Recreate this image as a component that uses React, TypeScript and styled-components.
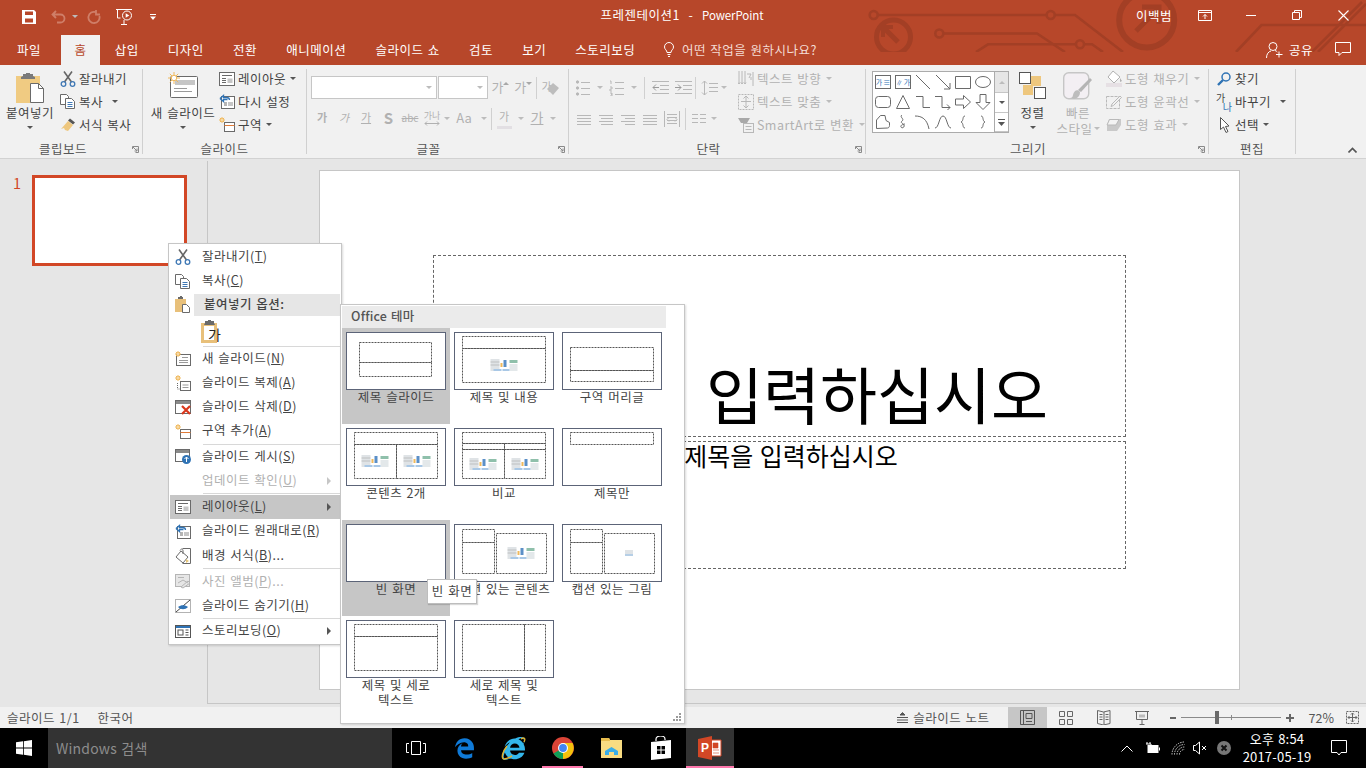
import React from "react";
import styled, { createGlobalStyle } from "styled-components";
import { FaEdgeLegacy, FaInternetExplorer } from "react-icons/fa";

const GlobalStyle = createGlobalStyle`
  html, body {
    margin: 0;
    padding: 0;
    background: #000;
  }
  * {
    box-sizing: border-box;
  }
  body {
    font-family: "Noto Sans CJK KR", "Noto Sans", sans-serif;
    font-size: 12.5px;
    letter-spacing: 0.5px;
    word-spacing: 1px;
    color: #444;
  }
  svg {
    display: block;
    flex-shrink: 0;
  }
`;

const RED = "#b7472a";
const DIS = "#b1b1b1";
const ST = "#6a6a6a";

const Window = styled.div`
  position: relative;
  width: 1366px;
  height: 768px;
  overflow: hidden;
  display: flex;
  flex-direction: column;
  background: #e6e6e6;
`;

/* ---------- header ---------- */
const Header = styled.header`
  position: relative;
  height: 65px;
  background: ${RED};
  color: #fff;
  flex-shrink: 0;
`;
const CircuitArt = styled.svg`
  position: absolute;
  left: 0;
  top: 0;
`;
const TitleBar = styled.div`
  position: relative;
  height: 35px;
  display: grid;
  grid-template-columns: 1fr auto 1fr;
  align-items: start;
`;
const Qat = styled.div`
  display: flex;
  align-items: center;
  padding-left: 22px;
  height: 33px;
`;
const QatSlot = styled.span<{ $ml: number }>`
  margin-left: ${(p) => p.$ml}px;
  display: flex;
`;
const DocTitle = styled.div`
  line-height: 30px;
  white-space: pre;
  padding-right: 2px;
`;
const LatinName = styled.span`
  font-size: 11.5px;
  letter-spacing: -0.1px;
`;
const WinControls = styled.div`
  display: flex;
  justify-content: flex-end;
  align-items: center;
  height: 30px;
`;
const UserName = styled.span`
  margin-right: 10px;
`;
const WinBtn = styled.div`
  width: 46px;
  height: 30px;
  display: flex;
  align-items: center;
  justify-content: center;
`;
const TabRow = styled.nav`
  position: relative;
  height: 30px;
  display: flex;
  padding-left: 2px;
`;
const Tab = styled.div<{ $active?: boolean; $first?: boolean }>`
  height: 30px;
  line-height: 29px;
  padding: 0 ${(p) => (p.$first ? 15 : p.$active ? 13.5 : 14.6)}px;
  margin-right: ${(p) => (p.$first ? 5 : 0)}px;
  background: ${(p) => (p.$active ? "#f1f1f1" : "transparent")};
  color: ${(p) => (p.$active ? RED : "#fff")};
  white-space: nowrap;
`;
const TellMe = styled.div`
  margin-left: 14px;
  display: flex;
  align-items: center;
  gap: 8px;
  height: 29px;
  color: #f4dcd5;
`;
const ShareArea = styled.div`
  margin-left: auto;
  padding-right: 15px;
  display: flex;
  align-items: center;
  height: 29px;
  color: #fff;
`;
const ShareLabel = styled.span`
  margin: 0 22px 0 6px;
`;

/* ---------- ribbon ---------- */
const Ribbon = styled.section`
  height: 94px;
  flex-shrink: 0;
  display: flex;
  padding-top: 4px;
  background: #f1f1f1;
  border-bottom: 1px solid #d2d2d2;
  position: relative;
`;
const Group = styled.div<{ $w: number }>`
  position: relative;
  width: ${(p) => p.$w}px;
  height: 85px;
  border-right: 1px solid #d0d0d0;
  display: flex;
  flex-direction: column;
`;
const GroupBody = styled.div<{ $pl?: number }>`
  height: 72px;
  flex-shrink: 0;
  margin-top: -1px;
  padding-left: ${(p) => p.$pl ?? 0}px;
  display: flex;
`;
const GroupLabel = styled.div<{ $pr?: number }>`
  height: 14px;
  flex-shrink: 0;
  line-height: 14px;
  margin-top: 2px;
  text-align: center;
  padding-right: ${(p) => p.$pr ?? 0}px;
  color: #555;
`;
const Launcher = styled.svg`
  position: absolute;
  right: 3px;
  bottom: 1px;
`;
const BigBtn = styled.div<{ $w: number; $off?: boolean }>`
  width: ${(p) => p.$w}px;
  padding-top: 4px;
  display: flex;
  flex-direction: column;
  align-items: center;
  color: ${(p) => (p.$off ? DIS : "#444")};
`;
const BigIconBox = styled.div`
  height: 33px;
`;
const BigLabel = styled.div`
  height: 16px;
  padding-bottom: 2px;
  white-space: nowrap;
  display: flex;
  align-items: center;
`;
const Caret = styled.i<{ $off?: boolean; $ml?: number; $mt?: number }>`
  display: block;
  width: 0;
  height: 0;
  flex-shrink: 0;
  margin-left: ${(p) => p.$ml ?? 0}px;
  margin-top: ${(p) => p.$mt ?? 0}px;
  border-left: 3px solid transparent;
  border-right: 3px solid transparent;
  border-top: 3px solid ${(p) => (p.$off ? "#bcbcbc" : "#555")};
`;
const SmallCol = styled.div<{ $ml?: number }>`
  display: flex;
  flex-direction: column;
  margin-left: ${(p) => p.$ml ?? 0}px;
`;
const SmallRow = styled.div<{ $off?: boolean }>`
  height: 23px;
  padding-bottom: 2px;
  display: flex;
  align-items: center;
  gap: 3px;
  white-space: nowrap;
  color: ${(p) => (p.$off ? DIS : "#444")};
`;
const IconSlot = styled.span`
  width: 16px;
  height: 16px;
  display: flex;
  align-items: center;
  justify-content: center;
`;
const ToolCol = styled.div<{ $w: number }>`
  width: ${(p) => p.$w}px;
  display: flex;
  flex-direction: column;
  padding-top: 8px;
`;
const ToolRow = styled.div`
  height: 23px;
  display: flex;
  align-items: center;
  margin-bottom: 8px;
`;
const Combo = styled.div<{ $w: number }>`
  width: ${(p) => p.$w}px;
  height: 23px;
  margin-right: 1px;
  background: #fff;
  border: 1px solid #c6c6c6;
  display: flex;
  align-items: center;
  justify-content: flex-end;
  padding-right: 4px;
`;
const ToolBtn = styled.div<{ $w: number }>`
  width: ${(p) => p.$w}px;
  height: 23px;
  display: flex;
  align-items: center;
  justify-content: center;
  color: ${DIS};
  font-size: 11px;
  letter-spacing: 0;
  white-space: nowrap;
`;
const ToolSep = styled.div<{ $mx: number }>`
  width: 1px;
  height: 22px;
  margin: 0 ${(p) => p.$mx}px;
  background: #d0d0d0;
`;
const Glyph = styled.span<{ $b?: boolean; $i?: boolean; $u?: boolean; $s?: boolean; $fs?: number }>`
  font-size: ${(p) => p.$fs ?? 11}px;
  line-height: 17px;
  margin-bottom: 2px;
  font-weight: ${(p) => (p.$b ? 700 : 400)};
  font-style: ${(p) => (p.$i ? "italic" : "normal")};
  text-decoration: ${(p) => (p.$u ? "underline" : p.$s ? "line-through" : "none")};
`;
const StackedGlyph = styled.div`
  display: flex;
  flex-direction: column;
  align-items: center;
`;
const TinyText = styled.span`
  font-size: 9px;
  line-height: 10px;
  letter-spacing: 0;
  color: ${DIS};
`;
const RaisedMark = styled.svg`
  margin: -9px 0 0 0;
`;
const OverlapMark = styled.svg`
  margin: 2px 0 0 -5px;
`;
const GlyphBar = styled.i`
  display: block;
  width: 15px;
  height: 3px;
  margin-top: -1px;
  background: #e2dfe3;
`;
const ReplaceBox = styled.span`
  display: flex;
  flex-direction: column;
  width: 16px;
  height: 17px;
  font-size: 10px;
  line-height: 9px;
  letter-spacing: 0;
  color: #444;
`;
const ReplaceLow = styled.span`
  align-self: flex-end;
  color: #2f73b5;
`;
const ShapeGallery = styled.div`
  width: 137px;
  height: 62px;
  margin-top: 3px;
  background: #fff;
  border: 1px solid #ababab;
  display: flex;
`;
const ShapeGrid = styled.div`
  width: 121px;
  display: grid;
  grid-template-columns: repeat(6, 20px);
  grid-auto-rows: 20px;
`;
const ShapeCell = styled.div`
  display: flex;
  align-items: center;
  justify-content: center;
`;
const TextBoxShape = styled.div<{ $vert?: boolean }>`
  width: 16px;
  height: 14px;
  border: 1px solid ${ST};
  display: flex;
  flex-direction: ${(p) => (p.$vert ? "row-reverse" : "row")};
  align-items: center;
  justify-content: center;
  gap: 1px;
  color: #2f73b5;
  font-size: 7px;
  line-height: 10px;
  letter-spacing: 0;
`;
const GalleryScroll = styled.div`
  flex: 1;
  display: flex;
  flex-direction: column;
  border-left: 1px solid #ababab;
`;
const ScrollBtn = styled.div<{ $off?: boolean; $h: number }>`
  height: ${(p) => p.$h}px;
  background: ${(p) => (p.$off ? "#e6e6e6" : "#fff")};
  border-bottom: 1px solid #c6c6c6;
  display: flex;
  align-items: center;
  justify-content: center;
`;
const UpCaret = styled(Caret)`
  transform: rotate(180deg);
`;
const CollapseBtn = styled.svg`
  position: absolute;
  right: 9px;
  bottom: 5px;
`;

/* ---------- workspace ---------- */
const Workspace = styled.main`
  flex: 1;
  display: flex;
  min-height: 0;
  padding-top: 2px;
`;
const ThumbPane = styled.aside`
  width: 207px;
  flex-shrink: 0;
  display: flex;
  align-items: flex-start;
  padding: 14px 0 0 13px;
`;
const ThumbNumber = styled.span`
  width: 19px;
  color: #d24726;
  font-size: 14.5px;
  line-height: 15px;
  letter-spacing: 0;
`;
const SlideThumb = styled.div`
  width: 155px;
  height: 91px;
  background: #fff;
  border: 3px solid #d24726;
`;
const EditArea = styled.div`
  flex: 1;
  margin-bottom: 3px;
  border-left: 1px solid #c6c6c6;
  border-bottom: 1px solid #c6c6c6;
  padding: 9px 0 0 111px;
`;
const Slide = styled.div`
  width: 921px;
  height: 520px;
  background: #fff;
  border: 1px solid #c6c6c6;
  padding: 84px 113px 0;
  display: flex;
  flex-direction: column;
  gap: 4px;
`;
const TitleHolder = styled.div`
  height: 182px;
  border: 1px dashed #666;
  color: #000;
  font-size: 62px;
  line-height: 1;
  letter-spacing: 0;
  word-spacing: 10px;
  display: flex;
  align-items: flex-end;
  justify-content: center;
  padding-bottom: 12px;
`;
const SubHolder = styled.div`
  height: 128px;
  border: 1px dashed #666;
  color: #000;
  font-size: 25px;
  line-height: 27px;
  letter-spacing: 0;
  text-align: center;
`;

/* ---------- status bar ---------- */
const StatusBar = styled.footer`
  height: 21px;
  flex-shrink: 0;
  background: #f1f1f1;
  display: flex;
  align-items: center;
  padding-left: 7px;
  color: #555;
`;
const StatusText = styled.span<{ $mr?: number; $ml?: number }>`
  margin-left: ${(p) => p.$ml ?? 0}px;
  margin-right: ${(p) => p.$mr ?? 0}px;
  white-space: nowrap;
`;
const Percent = styled(StatusText)`
  letter-spacing: 0;
`;
const StatusRight = styled.div`
  margin-left: auto;
  display: flex;
  align-items: center;
  height: 21px;
`;
const ViewBtn = styled.div<{ $active?: boolean; $w: number }>`
  width: ${(p) => p.$w}px;
  height: 21px;
  background: ${(p) => (p.$active ? "#c6c6c6" : "transparent")};
  display: flex;
  align-items: center;
  justify-content: center;
`;
const NoteGlyph = styled.svg`
  margin-right: 5px;
`;
const MinusGlyph = styled.svg`
  margin-left: 9px;
`;
const FitGlyph = styled.svg`
  margin-right: 7px;
`;
const ZoomTrack = styled.div`
  position: relative;
  width: 100px;
  height: 1px;
  margin: 0 5px;
  background: #8a8a8a;
`;
const ZoomTick = styled.i`
  position: absolute;
  left: 50px;
  top: -2px;
  width: 1px;
  height: 5px;
  background: #8a8a8a;
`;
const ZoomThumb = styled.i`
  position: absolute;
  left: 34px;
  top: -6px;
  width: 4px;
  height: 13px;
  background: #6a6a6a;
`;

/* ---------- task bar ---------- */
const Taskbar = styled.footer`
  height: 40px;
  flex-shrink: 0;
  background: #000;
  display: flex;
  align-items: center;
  color: #fff;
`;
const StartBtn = styled.div`
  width: 48px;
  height: 40px;
  display: flex;
  align-items: center;
  justify-content: center;
`;
const SearchBox = styled.div`
  width: 344px;
  height: 40px;
  background: #333;
  color: #8d8d8d;
  font-size: 14px;
  line-height: 40px;
  padding-left: 8px;
  letter-spacing: 0.2px;
`;
const TaskBtn = styled.div<{ $w?: number; $open?: boolean; $active?: boolean; $ml?: number }>`
  position: relative;
  width: ${(p) => p.$w ?? 48}px;
  height: 40px;
  margin-left: ${(p) => p.$ml ?? 0}px;
  background: ${(p) => (p.$active ? "#333" : "transparent")};
  display: flex;
  align-items: center;
  justify-content: center;
  &::after {
    content: "";
    display: ${(p) => (p.$open ? "block" : "none")};
    position: absolute;
    left: ${(p) => (p.$active ? 0 : 4)}px;
    right: ${(p) => (p.$active ? 0 : 4)}px;
    bottom: 0;
    height: 2px;
    background: #ff78ad;
  }
`;
const IeRing = styled.svg`
  position: absolute;
  left: 12px;
  top: 7px;
`;
const Tray = styled.div`
  margin-left: auto;
  display: flex;
  align-items: center;
  height: 40px;
`;
const TraySlot = styled.div<{ $w: number }>`
  width: ${(p) => p.$w}px;
  display: flex;
  justify-content: center;
`;
const Clock = styled.div`
  width: 78px;
  text-align: center;
  line-height: 18px;
  font-size: 13px;
  letter-spacing: 0.2px;
  color: #fff;
`;

/* ---------- context menu ---------- */
const ContextMenu = styled.div`
  position: absolute;
  left: 168px;
  top: 243px;
  width: 174px;
  height: 402px;
  padding: 1px;
  background: #fff;
  border: 1px solid #c6c6c6;
  box-shadow: 1px 1px 2px rgba(0, 0, 0, 0.15);
`;
const MenuItem = styled.div<{ $off?: boolean; $on?: boolean }>`
  height: 24.25px;
  display: flex;
  align-items: center;
  background: ${(p) => (p.$on ? "#c6c6c6" : "transparent")};
  color: ${(p) => (p.$off ? DIS : "#444")};
  white-space: nowrap;
  padding-left: 5px;
`;
const MenuIcon = styled.span`
  width: 16px;
  height: 16px;
  margin-right: 11px;
  display: flex;
  align-items: center;
  justify-content: center;
`;
const MenuText = styled.span`
  flex: 1;
  line-height: 16px;
  padding-bottom: 2px;
`;
const Arrow = styled.i<{ $off?: boolean }>`
  width: 0;
  height: 0;
  margin-right: 9px;
  border-top: 4px solid transparent;
  border-bottom: 4px solid transparent;
  border-left: 4px solid ${(p) => (p.$off ? "#c6c6c6" : "#555")};
`;
const MenuHeader = styled.div`
  height: 22px;
  display: flex;
  align-items: center;
  padding-left: 5px;
  font-weight: 500;
  color: #444;
`;
const MenuHeaderText = styled.span`
  flex: 1;
  height: 22px;
  line-height: 20px;
  margin-left: 3px;
  padding-left: 10px;
  background: #e6e6e6;
`;
const PasteRow = styled.div`
  height: 30px;
  padding: 4px 0 0 31px;
`;
const PasteOption = styled.span`
  position: relative;
  display: block;
  width: 22px;
  height: 24px;
`;
const PasteGa = styled.span`
  position: absolute;
  left: 7px;
  top: 5px;
  font-size: 14px;
  line-height: 18px;
  color: #222;
`;
const MenuSep = styled.div<{ $h: number }>`
  height: ${(p) => p.$h}px;
  margin-left: 33px;
  display: flex;
  align-items: flex-start;
  &::before {
    content: "";
    flex: 1;
    height: 1px;
    background: #d8d8d8;
  }
`;

/* ---------- layout gallery ---------- */
const LayoutGallery = styled.div`
  position: absolute;
  left: 340px;
  top: 304px;
  width: 345px;
  height: 420px;
  padding: 1px;
  background: #fff;
  border: 1px solid #c6c6c6;
  box-shadow: 1px 1px 2px rgba(0, 0, 0, 0.15);
`;
const GalleryHead = styled.div`
  width: 324px;
  height: 22px;
  line-height: 20px;
  padding-left: 9px;
  background: #ebebeb;
  color: #555;
  font-weight: 500;
  letter-spacing: 0.2px;
`;
const LayoutGrid = styled.div`
  display: grid;
  grid-template-columns: repeat(3, 108px);
  grid-auto-rows: 96px;
`;
const LayoutCell = styled.div<{ $on?: boolean }>`
  padding-top: 4px;
  background: ${(p) => (p.$on ? "#c6c6c6" : "transparent")};
  display: flex;
  flex-direction: column;
  align-items: center;
`;
const LayoutName = styled.div`
  width: 100px;
  margin-top: -1px;
  line-height: 15px;
  text-align: center;
  color: #444;
`;
const Grip = styled.svg`
  position: absolute;
  right: 3px;
  bottom: 2px;
`;
const Tooltip = styled.div`
  position: absolute;
  left: 427px;
  top: 579px;
  width: 50px;
  height: 25px;
  line-height: 22px;
  text-align: center;
  background: #fff;
  border: 1px solid #bdbdbd;
  box-shadow: 1px 1px 1px rgba(0, 0, 0, 0.15);
  color: #444;
`;

/* ---------- icons ---------- */
const Save = () => (
  <svg width="14" height="14" viewBox="0 0 14 14">
    <path fill="#fff" fillRule="evenodd" d="M0 0h12l2 2v12H0zM3 1.5v3.5h8V1.5zM3 8.5v4h8v-4z" />
  </svg>
);
const Undo = () => (
  <svg width="15" height="14" viewBox="0 0 15 14" fill="none" stroke="#cf7e68" strokeWidth="1.8">
    <path d="M5 1L1.5 4.5 5 8M2 4.5h7.5a4 4 0 0 1 0 8H6" />
  </svg>
);
const Redo = () => (
  <svg width="14" height="14" viewBox="0 0 14 14" fill="none" stroke="#cf7e68" strokeWidth="1.8">
    <path d="M9 2.2a5.6 5.6 0 1 0 3.4 3.8M9 0v4.5h4" />
  </svg>
);
const PresentIcon = () => (
  <svg width="17" height="16" viewBox="0 0 17 16" fill="none" stroke="#fff">
    <path d="M0 .5h16M1.5 1v8h3M8 11v4M5 15.5h6" />
    <circle cx="11" cy="6.5" r="4.5" />
    <path d="M9.7 4.2l3.6 2.3-3.6 2.3z" fill="#fff" stroke="none" />
  </svg>
);
const QatMore = () => (
  <svg width="6" height="6" viewBox="0 0 6 6" fill="#fff">
    <path d="M0 0h6v1H0zM0 2.5h6L3 6z" />
  </svg>
);
const QatMoreDark = () => (
  <svg width="7" height="7" viewBox="0 0 7 7" fill="#555">
    <path d="M0 0h7v1H0zM0 3h7L3.5 7z" />
  </svg>
);
const Circuit = () => (
  <CircuitArt width="1366" height="52" viewBox="0 0 1366 52" fill="none" stroke="#a33f25" strokeWidth="2.6">
    <circle cx="873.7" cy="15" r="4" />
    <path d="M878 15h168M1055 15h20l48 37" />
    <circle cx="1050.7" cy="15" r="4" />
    <circle cx="939.3" cy="33.5" r="4" />
    <path d="M943.5 33.5h93.5l28 18.5" />
    <path d="M976 52l12-7.7h88M1084 44.3h8l11 7.7" />
    <circle cx="1080" cy="44.3" r="4" />
    <circle cx="893.5" cy="37" r="17" strokeWidth="5" />
    <path d="M884 28l14 14" strokeWidth="5" />
    <path d="M883 37v-10h10" strokeWidth="4" />
    <circle cx="1146.7" cy="20" r="27.5" strokeWidth="6" />
    <path d="M1136 31l22-22M1142 7h17v17" strokeWidth="5" />
    <path d="M1236 52l25.5-27H1366M1312 52l50-50M1318 52l48-48" />
  </CircuitArt>
);
const DisplayIcon = () => (
  <svg width="14" height="11" viewBox="0 0 14 11" fill="none" stroke="#fff">
    <path d="M.5.5h13v10H.5zM.5 2.5h13M7 9V4.5M5 6.5l2-2 2 2" />
  </svg>
);
const MinIcon = () => (
  <svg width="10" height="1" viewBox="0 0 10 1">
    <path d="M0 0h10v1H0z" fill="#fff" />
  </svg>
);
const RestoreIcon = () => (
  <svg width="10" height="10" viewBox="0 0 10 10" fill="none" stroke="#fff">
    <path d="M.5 2.5h7v7h-7zM2.5 2.5v-2h7v7h-2" />
  </svg>
);
const CloseIcon = () => (
  <svg width="11" height="11" viewBox="0 0 11 11" stroke="#fff" strokeWidth="1.1">
    <path d="M.5.5l10 10M10.5.5l-10 10" />
  </svg>
);
const Bulb = () => (
  <svg width="10" height="15" viewBox="0 0 10 15" fill="none" stroke="#fff">
    <path d="M3 10.5C3 8 .5 7.5.5 5a4.5 4.5 0 0 1 9 0c0 2.5-2.5 3-2.5 5.5zM3.5 12.5h3M4 14.5h2" />
  </svg>
);
const ShareIcon = () => (
  <svg width="17" height="16" viewBox="0 0 17 16" fill="none" stroke="#fff">
    <circle cx="7" cy="4.5" r="4" />
    <path d="M.5 16c0-4 2-6.5 4.5-7M9 8.5c1 .3 1.7.8 2.3 1.5M13 9.5v6M10 12.5h6.5" />
  </svg>
);
const CommentIcon = () => (
  <svg width="16" height="15" viewBox="0 0 16 15" fill="none" stroke="#fff">
    <path d="M.5.5h15v10H7l-3 3v-3H.5z" />
  </svg>
);
const Scissors = () => (
  <svg width="16" height="16" viewBox="0 0 16 16" fill="none">
    <path d="M4 .5l7.5 10.5M12 .5L4.5 11" stroke="#666" strokeWidth="1.6" />
    <circle cx="3.5" cy="13" r="2.3" stroke="#3f78b5" strokeWidth="1.3" />
    <circle cx="12.5" cy="13" r="2.3" stroke="#3f78b5" strokeWidth="1.3" />
  </svg>
);
const CopyIcon = () => (
  <svg width="16" height="15" viewBox="0 0 16 15" fill="#fff" stroke={ST}>
    <path d="M.5.5h6l2 2v8h-8z" />
    <path d="M5.5 4.5h6l3 3v7h-9z" />
    <path d="M7.5 8.5h5M7.5 10.5h5M7.5 12.5h5" stroke="#3f78b5" />
  </svg>
);
const PasteBig = () => (
  <svg width="28" height="31" viewBox="0 0 28 31">
    <path d="M0 4h24v27H0z" fill="#f0cb82" />
    <path d="M7 4V2h3V1h4v1h3v2l2 1v2H5V5z" fill="#7a7a7a" />
    <path d="M14.5 11.5h8l5 5v14h-13z" fill="#fff" stroke="#6a6a6a" />
    <path d="M22.5 11.5v5h5" fill="none" stroke="#6a6a6a" />
  </svg>
);
const Painter = () => (
  <svg width="16" height="14" viewBox="0 0 16 14">
    <path d="M10 .5l5 4-2 2-5-4z" fill="#555" />
    <path d="M8 3l5 4-5 6-3-1-1-2-3 1z" fill="#eec77e" />
  </svg>
);
const Sun = ({ x, y, r = 5 }: { x: number; y: number; r?: number }) => (
  <g stroke="#f0b95c" strokeWidth="1">
    <path
      d={`M${x - r} ${y}h${2 * r}M${x} ${y - r}v${2 * r}M${x - r * 0.7} ${y - r * 0.7}l${1.4 * r} ${1.4 * r}M${x + r * 0.7} ${y - r * 0.7}l${-1.4 * r} ${1.4 * r}`}
    />
    <circle cx={x} cy={y} r={r * 0.45} fill="#fff" />
  </g>
);
const NewSlideBig = () => (
  <svg width="30" height="26" viewBox="0 0 30 26">
    <rect x="2.5" y="4.5" width="27" height="21" rx="1" fill="#fff" stroke="#6a6a6a" />
    <path d="M7 8h20v5H7z" fill="#c6c6c6" />
    <path d="M6 16.5h13M6 19.5h18" stroke="#9a9a9a" />
    <Sun x={6} y={6} r={6} />
  </svg>
);
const LayoutIcon = () => (
  <svg width="16" height="14" viewBox="0 0 16 14" fill="#fff" stroke={ST}>
    <rect x=".5" y=".5" width="15" height="13" />
    <path d="M3 3.5h10M3 6.5h4M3 8.5h4M3 10.5h4" />
    <rect x="8.5" y="6.5" width="5" height="4.5" fill="#c6c6c6" stroke="none" />
  </svg>
);
const ResetIcon = () => (
  <svg width="16" height="15" viewBox="0 0 16 15" fill="#fff">
    <rect x="2.5" y="2.5" width="13" height="12" stroke={ST} />
    <path d="M5 9h3M5 11h3" stroke={ST} />
    <rect x="9" y="8" width="5" height="4" fill="#c6c6c6" />
    <path d="M1 4.5L4.5 1.5v2h3c2 0 3 1 3 2.5M1 4.5l3.5 3v-2h4" fill="none" stroke="#2f73b5" strokeWidth="1.3" />
  </svg>
);
const SectionIcon = () => (
  <svg width="16" height="15" viewBox="0 0 16 15" fill="#fff">
    <rect x="5.5" y="5.5" width="10" height="9" stroke={ST} />
    <path d="M5.5 8.5h10" stroke="#e07b39" />
    <Sun x={3} y={3} r={3} />
  </svg>
);
const DupIcon = () => (
  <svg width="16" height="16" viewBox="0 0 16 16" fill="#fff">
    <rect x="5.5" y="6.5" width="10" height="9" stroke={ST} />
    <path d="M7.5 10h6M7.5 12.5h6" stroke="#9a9a9a" />
    <path d="M2.5 8v6h3" fill="none" stroke={ST} strokeDasharray="1 1" />
    <Sun x={3} y={3} r={3} />
  </svg>
);
const NewSmall = () => (
  <svg width="16" height="15" viewBox="0 0 16 15" fill="#fff">
    <rect x="1.5" y="3.5" width="14" height="11" stroke={ST} />
    <path d="M7 6.5h6M4 9.5h9M4 11.5h9" stroke="#9a9a9a" />
    <Sun x={3} y={3} r={3} />
  </svg>
);
const DeleteIcon = () => (
  <svg width="16" height="15" viewBox="0 0 16 15" fill="#fff">
    <rect x=".5" y=".5" width="15" height="13" stroke={ST} />
    <path d="M1 1h14v3H1z" fill="#8a8a8a" />
    <path d="M7 6l8 8M15 6l-8 8" stroke="#d9371c" strokeWidth="2.2" />
  </svg>
);
const PublishIcon = () => (
  <svg width="16" height="15" viewBox="0 0 16 15" fill="#fff">
    <rect x=".5" y=".5" width="14" height="12" stroke={ST} />
    <path d="M1 1h13v3H1z" fill="#8a8a8a" />
    <circle cx="11.5" cy="10.5" r="4.5" fill="#2f73b5" />
    <path d="M11.5 13v-5M9.5 10l2-2 2 2" stroke="#fff" fill="none" />
  </svg>
);
const BgIcon = () => (
  <svg width="16" height="16" viewBox="0 0 16 16" fill="#fff" stroke={ST}>
    <path d="M7.5.5h8v15h-8" />
    <path d="M1 9l5-6 7 6-5 6z" />
    <path d="M5 2.5c1-2 3-2 3 .5v3" fill="none" />
    <path d="M11 11l3 2-3 2z" fill="#e8c676" stroke="none" />
  </svg>
);
const AlbumIcon = () => (
  <svg width="16" height="15" viewBox="0 0 16 15" fill="#e6e6e6" stroke="#b5b5b5">
    <rect x=".5" y=".5" width="14" height="12" />
    <path d="M3 3.5h6M3 9l5-3 5 3M6 13l7-6 2 2-7 5z" />
  </svg>
);
const HideIcon = () => (
  <svg width="16" height="14" viewBox="0 0 16 14" fill="none">
    <path d="M.5.5h15v13H.5z" stroke="#666" strokeDasharray="1 1" />
    <path d="M1 13L15 1" stroke="#444" />
    <path d="M3 8c3-2.5 7-2.5 10 0-3 3-7 3-10 0z" fill="#2f73b5" />
  </svg>
);
const BoardIcon = () => (
  <svg width="16" height="13" viewBox="0 0 16 13" fill="#fff" stroke="#555">
    <rect x=".5" y=".5" width="15" height="12" />
    <path d="M1 1h14v2H1z" fill="#2f73b5" stroke="none" />
    <rect x="3" y="5" width="5" height="5" />
    <path d="M10.5 5h3M10.5 7.5h3M10.5 10h3" />
  </svg>
);
const PasteSmall = () => (
  <svg width="16" height="17" viewBox="0 0 16 17">
    <path d="M0 3h11v13H0z" fill="#e8c07a" />
    <path d="M3 3V1h2V0h2v1h1v2z" fill="#6a6a6a" />
    <path d="M7.5 8.5h4l3 3v5h-7z" fill="#fff" stroke="#6a6a6a" />
  </svg>
);
const PasteOptIcon = () => (
  <svg width="22" height="24" viewBox="0 0 22 24">
    <path d="M0 3h16v20H0z" fill="#e8c07a" />
    <path d="M3 6h10v14H3z" fill="#fff" />
    <path d="M4 3V1h3V0h3v1h3v2l1 2H3z" fill="#6a6a6a" />
  </svg>
);
const LauncherIcon = () => (
  <Launcher width="7" height="7" viewBox="0 0 7 7" fill="none" stroke="#8a8a8a">
    <path d="M.5 3V.5H6.5V6.5H3.5" />
    <path d="M1 1l4 4M5 2.5V5H2.5" />
  </Launcher>
);
const Lines = ({ rows, c = "#b8b8b8", w = 14 }: { rows: [number, number][]; c?: string; w?: number }) => (
  <svg width={w} height="16" viewBox={`0 0 ${w} 16`} stroke={c} fill="none">
    {rows.map(([x, y], i) => (
      <path key={i} d={`M${x} ${y}.5H${w}`} />
    ))}
  </svg>
);
const Bullets = () => (
  <svg width="14" height="16" viewBox="0 0 14 16" stroke="#b8b8b8" fill="#b8b8b8">
    <circle cx="1.5" cy="2" r="1.2" />
    <circle cx="1.5" cy="8" r="1.2" />
    <circle cx="1.5" cy="14" r="1.2" />
    <path d="M5 2.5h9M5 8.5h9M5 14.5h9" />
  </svg>
);
const Numbers = () => (
  <svg width="16" height="16" viewBox="0 0 16 16" stroke="#b8b8b8" fill="#b8b8b8">
    <path d="M1 1h1v3M1 7h2v2H1v2h2M1 13h2v1H2h1v2H1" fill="none" />
    <path d="M6 2.5h9M6 8.5h9M6 14.5h9" />
  </svg>
);
const Indent = ({ out }: { out?: boolean }) => (
  <svg width="17" height="13" viewBox="0 0 17 13" stroke="#b8b8b8" fill="none">
    <path d="M0 .5h17M8 4.5h9M8 8.5h9M0 12.5h17" />
    {out ? <path d="M7 6.5H1M4 3.5l-3 3 3 3" stroke="#9a9a9a" /> : <path d="M0 6.5h6M3 3.5l3 3-3 3" stroke="#9a9a9a" />}
  </svg>
);
const LineSpace = () => (
  <svg width="17" height="16" viewBox="0 0 17 16" stroke="#b8b8b8" fill="none">
    <path d="M3.5 1v14M1 3.5l2.5-2.5 2.5 2.5M1 12.5l2.5 2.5 2.5-2.5M8 3.5h9M8 7.5h9M8 11.5h9" />
  </svg>
);
const Distribute = () => (
  <svg width="16" height="16" viewBox="0 0 16 16" stroke="#b8b8b8" fill="none">
    <path d="M.5 0v16M15.5 0v16M3 3.5h10M3 6.5h10M3 9.5h10M3 12.5h10M5 6.5l-2 2 2 2M11 6.5l2 2-2 2" />
  </svg>
);
const Columns = () => (
  <svg width="14" height="9" viewBox="0 0 14 9" stroke="#b8b8b8" fill="none">
    <path d="M0 .5h6M8 .5h6M0 4.5h6M8 4.5h6M0 8.5h6M8 8.5h6" />
  </svg>
);
const TextDir = () => (
  <svg width="16" height="16" viewBox="0 0 16 16" stroke="#b8b8b8" fill="none">
    <path d="M1 0v13M4 0v13M7 0v13M1 13l-1-1.5M1 13l1-1.5M4 13l-1-1.5M4 13l1-1.5M7 13l-1-1.5M7 13l1-1.5M15 1v14" />
    <path d="M9 3h4l-2 4M13 6v3" />
  </svg>
);
const TextFit = () => (
  <svg width="16" height="16" viewBox="0 0 16 16" stroke="#b8b8b8" fill="none">
    <path d="M.5.5h15v15H.5z" strokeDasharray="2 1" />
    <path d="M8 2v12M5.5 4.5L8 2l2.5 2.5M5.5 11.5L8 14l2.5-2.5M3 7.5h10" />
  </svg>
);
const SmartArt = () => (
  <svg width="16" height="16" viewBox="0 0 16 16" stroke="#b8b8b8" fill="none">
    <path d="M0 1h12l-3 5H3z" fill="#a8a8a8" stroke="none" />
    <rect x="5.5" y="6.5" width="10" height="9" fill="#f1f1f1" />
    <path d="M7.5 9.5h6M7.5 12.5h6" />
  </svg>
);
const Highlight = () => (
  <StackedGlyph>
    <Glyph $fs={11}>가</Glyph>
    <GlyphBar />
  </StackedGlyph>
);
const Eraser = () => (
  <>
    <Glyph $fs={11}>가</Glyph>
    <OverlapMark width="12" height="12" viewBox="0 0 12 12">
      <path d="M0 6l6-6 6 5-6 7z" fill="#bdbdbd" />
    </OverlapMark>
  </>
);
const GaArrow = ({ up }: { up?: boolean }) => (
  <>
    <Glyph $fs={13}>가</Glyph>
    <RaisedMark width="6" height="4" viewBox="0 0 6 4">
      <path d={up ? "M0 4l3-3 3 3z" : "M0 1h6l-3 3z"} fill="#a8a8a8" />
    </RaisedMark>
  </>
);
const Spacing = () => (
  <StackedGlyph>
    <TinyText>가나</TinyText>
    <svg width="16" height="5" viewBox="0 0 16 5" stroke="#b1b1b1" fill="none">
      <path d="M1 2.5h14M3 .5l-2 2 2 2M13 .5l2 2-2 2" />
    </svg>
  </StackedGlyph>
);
const ArrangeIcon = () => (
  <svg width="27" height="27" viewBox="0 0 27 27">
    <rect x="12" y="4" width="10" height="10" fill="#eec77e" />
    <rect x="4" y="13" width="10" height="10" fill="#eec77e" />
    <rect x=".5" y=".5" width="11" height="11" fill="#fff" stroke="#555" />
    <rect x="15.5" y="15.5" width="11" height="11" fill="#fff" stroke="#555" />
  </svg>
);
const QuickStyle = () => (
  <svg width="30" height="30" viewBox="0 0 30 30">
    <rect x=".7" y=".7" width="25" height="26" rx="5" fill="#f3eff3" stroke="#c6c6c6" strokeWidth="1.4" />
    <path d="M29 8L18 20l-3-2L27 6z" fill="#b5b5b5" />
    <path d="M17 20c-2-3-6-2-7 3-.3 2-1 3-3 3 5 2 10 0 10-6z" fill="#bdbdbd" />
  </svg>
);
const FillIcon = () => (
  <svg width="16" height="17" viewBox="0 0 16 17">
    <path d="M0 13h16v4H0z" fill="#e6e0e4" />
    <path d="M7 1l7 6-6 6-6-6z" fill="#fff" stroke="#b1b1b1" />
    <path d="M14 8l2 3-2 1z" fill="#b1b1b1" />
  </svg>
);
const OutlineIcon = () => (
  <svg width="16" height="15" viewBox="0 0 16 15" fill="none" stroke="#b9b9b9">
    <path d="M.5 2.5h13v12H.5z" strokeDasharray="3 1" />
    <path d="M6 10l8-8 1.5 1.5-8 8-2.5 1z" fill="#f1f1f1" />
  </svg>
);
const EffectIcon = () => (
  <svg width="16" height="14" viewBox="0 0 16 14">
    <path d="M3 1h12v6l-4 6H1V7z" fill="#c9c9c9" />
    <path d="M3.5 1.5H13L10 7H1z" fill="#f3f3f3" stroke="#b9b9b9" />
  </svg>
);
const FindIcon = () => (
  <svg width="14" height="14" viewBox="0 0 14 14" fill="none" stroke="#2f73b5">
    <circle cx="9" cy="5" r="4" strokeWidth="1.5" />
    <path d="M6 8l-5 5" strokeWidth="2.4" />
  </svg>
);
const ReplaceIcon = () => (
  <ReplaceBox>
    <span>가</span>
    <ReplaceLow>나</ReplaceLow>
  </ReplaceBox>
);
const SelectIcon = () => (
  <svg width="13" height="16" viewBox="0 0 13 16" fill="#fff" stroke="#555">
    <path d="M2.5.5v12l3-2.5 2.5 5.5 2-1-2.5-5 3.5-.5z" />
  </svg>
);

const S = (children: React.ReactNode) => (
  <svg width="16" height="16" viewBox="0 0 16 16" fill="none" stroke={ST}>
    {children}
  </svg>
);
const shapes: React.ReactNode[] = [
  <TextBoxShape>가<span>≡</span></TextBoxShape>,
  <TextBoxShape $vert>가<span>∥</span></TextBoxShape>,
  S(<path d="M1 1l14 14" />),
  S(<path d="M1 1l14 14M15 9v6H9" />),
  <svg width="16" height="13" viewBox="0 0 16 13" fill="none" stroke={ST}><path d="M.5.5h15v12H.5z" /></svg>,
  <svg width="16" height="12" viewBox="0 0 16 12" fill="none" stroke={ST}><ellipse cx="8" cy="6" rx="7.5" ry="5.5" /></svg>,
  <svg width="16" height="12" viewBox="0 0 16 12" fill="none" stroke={ST}><rect x=".5" y=".5" width="15" height="11" rx="3" /></svg>,
  S(<path d="M8 1.5l6.5 13h-13z" />),
  S(<path d="M1 2.5h7v11h7" />),
  S(<path d="M0 2.5h7v11h8M12 10.5l3 3-3 3" />),
  S(<path d="M.5 5h8V1.5l7 6.5-7 6.5V11H.5z" />),
  S(<path d="M5 .5h6v8h4l-7 7-7-7h4z" />),
  S(<path d="M1.5 14.5V6l4-4.5h4.5l1 5 3.5 2v3c0 1.5-1 2.5-2 2.5z" />),
  S(<path d="M7 1c-3 2 3 4 0 6-2 2 1 2 2 4s-2 4-3 2 3-3 4-3" />),
  S(<path d="M0 2c7 0 12 3 14 13" />),
  S(<path d="M0 14c4 0 4-12 8-12s4 12 8 12" />),
  S(<path d="M10 2c-3 0-1 5-4 6 3 1 1 6 4 6" />),
  S(<path d="M6 2c3 0 1 5 4 6-3 1-1 6-4 6" />),
];

/* ---------- layout thumbnails ---------- */
type Rect = [number, number, number, number];
type Thumb = {
  name: React.ReactNode;
  rects: Rect[];
  icons?: [number, number][];
  pic?: [number, number];
  on?: boolean;
};

const MiniContent = ({ x, y }: { x: number; y: number }) => (
  <g transform={`translate(${x - 13.5} ${y - 6})`}>
    <rect x="0" y="0" width="9" height="12" fill="#dfe3e6" />
    <path d="M0 3h9M0 6h9" stroke="#aaa" strokeWidth=".6" />
    <rect x="10" y="4" width="2" height="4" fill="#f0b95c" />
    <rect x="13" y="1" width="3" height="7" fill="#5b8fc7" />
    <rect x="19" y="1" width="8" height="3" fill="#8fc0ab" />
    <rect x="19" y="5" width="8" height="7" fill="#e3e8ea" />
    <path d="M3 11h8" stroke="#a9c8e6" strokeWidth="2" />
    <path d="M12 11h7" stroke="#a9c8e6" strokeWidth="2" />
  </g>
);
const LayoutThumb = ({ rects, icons, pic }: Thumb) => (
  <svg width="100" height="58" viewBox="0 0 100 58">
    <rect x=".5" y=".5" width="99" height="57" fill="#fff" stroke="#5c6478" />
    {rects.map(([x, y, w, h], i) => (
      <rect key={i} x={x + 0.5} y={y + 0.5} width={w} height={h} fill="none" stroke="#555" strokeDasharray="2 1" />
    ))}
    {icons?.map(([x, y], i) => (
      <MiniContent key={i} x={x} y={y} />
    ))}
    {pic && (
      <g transform={`translate(${pic[0] - 4} ${pic[1] - 3})`}>
        <rect width="8" height="6" fill="#dfe3e6" />
        <path d="M0 5h8" stroke="#a9c8e6" strokeWidth="1.5" />
      </g>
    )}
  </svg>
);
const thumbs: Thumb[] = [
  { name: "제목 슬라이드", on: true, rects: [[13, 10, 72, 20], [13, 30, 72, 14]] },
  { name: "제목 및 내용", rects: [[8, 4, 83, 12], [8, 16, 83, 34]], icons: [[50, 33]] },
  { name: "구역 머리글", rects: [[8, 15, 83, 23], [8, 38, 83, 11]] },
  { name: "콘텐츠 2개", rects: [[8, 4, 83, 12], [8, 16, 42, 34], [50, 16, 41, 34]], icons: [[29, 33], [71, 33]] },
  { name: "비교", rects: [[8, 4, 83, 11], [8, 15, 42, 6], [50, 15, 41, 6], [8, 21, 42, 29], [50, 21, 41, 29]], icons: [[29, 36], [71, 36]] },
  { name: "제목만", rects: [[8, 4, 83, 12]] },
  { name: "빈 화면", on: true, rects: [] },
  { name: "캡션 있는 콘텐츠", rects: [[8, 5, 32, 13], [8, 18, 32, 31], [42, 9, 50, 40]], icons: [[67, 29]] },
  { name: "캡션 있는 그림", rects: [[8, 5, 32, 13], [8, 18, 32, 31], [42, 9, 50, 40]], pic: [67, 29] },
  { name: <>제목 및 세로<br />텍스트</>, rects: [[8, 4, 83, 12], [8, 16, 83, 34]] },
  { name: <>세로 제목 및<br />텍스트</>, rects: [[8, 4, 62, 46], [70, 4, 21, 46]] },
];

const Items = ({ icon, label, k, tail, off, on }: { icon?: React.ReactNode; label: string; k: string; tail?: string; off?: boolean; on?: boolean }) => (
  <MenuItem $off={off} $on={on}>
    <MenuIcon>{icon}</MenuIcon>
    <MenuText>
      {label}(<u>{k}</u>){tail}
    </MenuText>
    {(label === "업데이트 확인" || label === "레이아웃" || label === "스토리보딩") && <Arrow $off={off} />}
  </MenuItem>
);

function App() {
  return (
    <Window>
      <GlobalStyle />
      <Header>
        <Circuit />
        <TitleBar>
          <Qat>
            <Save />
            <QatSlot $ml={15}><Undo /></QatSlot>
            <QatSlot $ml={6}><Caret $off /></QatSlot>
            <QatSlot $ml={9}><Redo /></QatSlot>
            <QatSlot $ml={15}><PresentIcon /></QatSlot>
            <QatSlot $ml={17}><QatMore /></QatSlot>
          </Qat>
          <DocTitle>프레젠테이션1  -  <LatinName>PowerPoint</LatinName></DocTitle>
          <WinControls>
            <UserName>이백범</UserName>
            <WinBtn><DisplayIcon /></WinBtn>
            <WinBtn><MinIcon /></WinBtn>
            <WinBtn><RestoreIcon /></WinBtn>
            <WinBtn><CloseIcon /></WinBtn>
          </WinControls>
        </TitleBar>
        <TabRow>
          <Tab $first>파일</Tab>
          <Tab $active>홈</Tab>
          {["삽입", "디자인", "전환", "애니메이션", "슬라이드 쇼", "검토", "보기", "스토리보딩"].map((t) => (
            <Tab key={t}>{t}</Tab>
          ))}
          <TellMe>
            <Bulb />
            어떤 작업을 원하시나요?
          </TellMe>
          <ShareArea>
            <ShareIcon />
            <ShareLabel>공유</ShareLabel>
            <CommentIcon />
          </ShareArea>
        </TabRow>
      </Header>

      <Ribbon>
        <Group $w={143}>
          <GroupBody>
            <BigBtn $w={60}>
              <BigIconBox><PasteBig /></BigIconBox>
              <BigLabel>붙여넣기</BigLabel>
              <Caret $mt={5} />
            </BigBtn>
            <SmallCol>
              <SmallRow><IconSlot><Scissors /></IconSlot>잘라내기</SmallRow>
              <SmallRow><IconSlot><CopyIcon /></IconSlot>복사<Caret $ml={6} /></SmallRow>
              <SmallRow><IconSlot><Painter /></IconSlot>서식 복사</SmallRow>
            </SmallCol>
          </GroupBody>
          <GroupLabel $pr={16}>클립보드</GroupLabel>
          <LauncherIcon />
        </Group>

        <Group $w={164}>
          <GroupBody $pl={4}>
            <BigBtn $w={72}>
              <BigIconBox><NewSlideBig /></BigIconBox>
              <BigLabel>새 슬라이드</BigLabel>
              <Caret $mt={5} />
            </BigBtn>
            <SmallCol>
              <SmallRow><IconSlot><LayoutIcon /></IconSlot>레이아웃<Caret $ml={1} /></SmallRow>
              <SmallRow><IconSlot><ResetIcon /></IconSlot>다시 설정</SmallRow>
              <SmallRow><IconSlot><SectionIcon /></IconSlot>구역<Caret $ml={1} /></SmallRow>
            </SmallCol>
          </GroupBody>
          <GroupLabel>슬라이드</GroupLabel>
        </Group>

        <Group $w={262}>
          <GroupBody $pl={4}>
            <ToolCol $w={250}>
              <ToolRow>
                <Combo $w={127}><Caret $off /></Combo>
                <Combo $w={50}><Caret $off /></Combo>
                <ToolBtn $w={24}><GaArrow up /></ToolBtn>
                <ToolBtn $w={22}><GaArrow /></ToolBtn>
                <ToolSep $mx={2} />
                <ToolBtn $w={22}><Eraser /></ToolBtn>
              </ToolRow>
              <ToolRow>
                <ToolBtn $w={22}><Glyph $b>가</Glyph></ToolBtn>
                <ToolBtn $w={22}><Glyph $i>가</Glyph></ToolBtn>
                <ToolBtn $w={22}><Glyph $u>가</Glyph></ToolBtn>
                <ToolBtn $w={23}><Glyph $b $fs={15}>S</Glyph></ToolBtn>
                <ToolBtn $w={20}><Glyph $s $fs={10}>abc</Glyph></ToolBtn>
                <ToolBtn $w={24}><Spacing /></ToolBtn>
                <ToolBtn $w={6}><Caret $off /></ToolBtn>
                <ToolBtn $w={28}><Glyph $fs={13}>Aa</Glyph></ToolBtn>
                <ToolBtn $w={12}><Caret $off /></ToolBtn>
                <ToolSep $mx={1} />
                <ToolBtn $w={22}><Highlight /></ToolBtn>
                <ToolBtn $w={12}><Caret $off /></ToolBtn>
                <ToolBtn $w={20}><Glyph $u $fs={14}>가</Glyph></ToolBtn>
                <ToolBtn $w={12}><Caret $off /></ToolBtn>
              </ToolRow>
            </ToolCol>
          </GroupBody>
          <GroupLabel $pr={18}>글꼴</GroupLabel>
          <LauncherIcon />
        </Group>

        <Group $w={297}>
          <GroupBody $pl={4}>
            <ToolCol $w={166}>
              <ToolRow>
                <ToolBtn $w={20}><Bullets /></ToolBtn>
                <ToolBtn $w={14}><Caret $off /></ToolBtn>
                <ToolBtn $w={20}><Numbers /></ToolBtn>
                <ToolBtn $w={14}><Caret $off /></ToolBtn>
                <ToolSep $mx={3} />
                <ToolBtn $w={25}><Indent out /></ToolBtn>
                <ToolBtn $w={20}><Indent /></ToolBtn>
                <ToolSep $mx={2} />
                <ToolBtn $w={22}><LineSpace /></ToolBtn>
                <ToolBtn $w={8}><Caret $off /></ToolBtn>
              </ToolRow>
              <ToolRow>
                <ToolBtn $w={22}><Lines w={14} rows={[[0, 4], [0, 7], [0, 10], [0, 13]]} /></ToolBtn>
                <ToolBtn $w={22}><Lines w={14} rows={[[0, 4], [2, 7], [0, 10], [2, 13]]} /></ToolBtn>
                <ToolBtn $w={22}><Lines w={14} rows={[[0, 4], [4, 7], [0, 10], [4, 13]]} /></ToolBtn>
                <ToolBtn $w={22}><Lines w={14} rows={[[0, 4], [0, 7], [0, 10], [0, 13]]} /></ToolBtn>
                <ToolBtn $w={21}><Distribute /></ToolBtn>
                <ToolSep $mx={3} />
                <ToolBtn $w={20}><Columns /></ToolBtn>
                <ToolBtn $w={10}><Caret $off /></ToolBtn>
              </ToolRow>
            </ToolCol>
            <SmallCol>
              <SmallRow $off><IconSlot><TextDir /></IconSlot>텍스트 방향<Caret $off $ml={2} /></SmallRow>
              <SmallRow $off><IconSlot><TextFit /></IconSlot>텍스트 맞춤<Caret $off $ml={2} /></SmallRow>
              <SmallRow $off><IconSlot><SmartArt /></IconSlot>SmartArt로 변환<Caret $off $ml={2} /></SmallRow>
            </SmallCol>
          </GroupBody>
          <GroupLabel $pr={17}>단락</GroupLabel>
          <LauncherIcon />
        </Group>

        <Group $w={343}>
          <GroupBody $pl={6}>
            <ShapeGallery>
              <ShapeGrid>
                {shapes.map((sh, i) => (
                  <ShapeCell key={i}>{sh}</ShapeCell>
                ))}
              </ShapeGrid>
              <GalleryScroll>
                <ScrollBtn $off $h={21}><UpCaret $off /></ScrollBtn>
                <ScrollBtn $h={20}><Caret /></ScrollBtn>
                <ScrollBtn $h={19}><QatMoreDark /></ScrollBtn>
              </GalleryScroll>
            </ShapeGallery>
            <BigBtn $w={47}>
              <BigIconBox><ArrangeIcon /></BigIconBox>
              <BigLabel>정렬</BigLabel>
              <Caret $mt={5} />
            </BigBtn>
            <BigBtn $w={44} $off>
              <BigIconBox><QuickStyle /></BigIconBox>
              <BigLabel>빠른</BigLabel>
              <BigLabel>스타일<Caret $off $ml={1} /></BigLabel>
            </BigBtn>
            <SmallCol $ml={6}>
              <SmallRow $off><IconSlot><FillIcon /></IconSlot>도형 채우기<Caret $off $ml={2} /></SmallRow>
              <SmallRow $off><IconSlot><OutlineIcon /></IconSlot>도형 윤곽선<Caret $off $ml={2} /></SmallRow>
              <SmallRow $off><IconSlot><EffectIcon /></IconSlot>도형 효과<Caret $off $ml={2} /></SmallRow>
            </SmallCol>
          </GroupBody>
          <GroupLabel $pr={18}>그리기</GroupLabel>
          <LauncherIcon />
        </Group>

        <Group $w={87}>
          <GroupBody $pl={7}>
            <SmallCol>
              <SmallRow><IconSlot><FindIcon /></IconSlot>찾기</SmallRow>
              <SmallRow><IconSlot><ReplaceIcon /></IconSlot>바꾸기<Caret $ml={6} /></SmallRow>
              <SmallRow><IconSlot><SelectIcon /></IconSlot>선택<Caret $ml={1} /></SmallRow>
            </SmallCol>
          </GroupBody>
          <GroupLabel>편집</GroupLabel>
        </Group>

        <CollapseBtn width="9" height="6" viewBox="0 0 9 6" fill="none" stroke="#555" strokeWidth="1.6">
          <path d="M.5 5.5l4-4 4 4" />
        </CollapseBtn>
      </Ribbon>

      <Workspace>
        <ThumbPane>
          <ThumbNumber>1</ThumbNumber>
          <SlideThumb />
        </ThumbPane>
        <EditArea>
          <Slide>
            <TitleHolder>제목을 입력하십시오</TitleHolder>
            <SubHolder>부제목을 입력하십시오</SubHolder>
          </Slide>
        </EditArea>
      </Workspace>

      <StatusBar>
        <StatusText $mr={18}>슬라이드 1/1</StatusText>
        <StatusText>한국어</StatusText>
        <StatusRight>
          <NoteGlyph width="11" height="11" viewBox="0 0 11 11" stroke="#555" fill="#555">
            <path d="M3 3l2.5-2.5L8 3z" />
            <path d="M0 5.5h11M0 8h11M0 10.5h11" />
          </NoteGlyph>
          <StatusText $mr={18}>슬라이드 노트</StatusText>
          <ViewBtn $active $w={39}>
            <svg width="15" height="15" viewBox="0 0 15 15" fill="none" stroke="#555"><path d="M.5.5h14v14H.5zM3.5.5v14M6 3.5h6v5H6zM6 11.5h6" /></svg>
          </ViewBtn>
          <ViewBtn $w={38}>
            <svg width="14" height="14" viewBox="0 0 14 14" fill="none" stroke="#666"><path d="M.5.5h5v5h-5zM8.5.5h5v5h-5zM.5 8.5h5v5h-5zM8.5 8.5h5v5h-5z" /></svg>
          </ViewBtn>
          <ViewBtn $w={38}>
            <svg width="14" height="15" viewBox="0 0 14 15" fill="none" stroke="#666"><path d="M.5.5l6 1.5 6.5-1.5v13l-6.5 1.5-6-1.5zM7 2v13M2.5 4.5h3M2.5 7h3M2.5 9.5h3M8.5 4.5h3M8.5 7h3M8.5 9.5h3" /></svg>
          </ViewBtn>
          <ViewBtn $w={38}>
            <svg width="14" height="14" viewBox="0 0 14 14" fill="none" stroke="#666"><path d="M0 .5h14M1.5 1v7.5h11V1M7 8.5V13M4.5 13.5h5" /><path d="M4 3.5h6v3H4z" fill="#bbb" stroke="none" /></svg>
          </ViewBtn>
          <MinusGlyph width="6" height="2" viewBox="0 0 6 2"><path d="M0 0h6v2H0z" fill="#666" /></MinusGlyph>
          <ZoomTrack>
            <ZoomTick />
            <ZoomThumb />
          </ZoomTrack>
          <svg width="8" height="8" viewBox="0 0 8 8"><path d="M3 0h2v3h3v2H5v3H3V5H0V3h3z" fill="#666" /></svg>
          <Percent $ml={15} $mr={12}>72%</Percent>
          <FitGlyph width="13" height="13" viewBox="0 0 13 13" fill="none" stroke="#666">
            <path d="M.5.5h12v12H.5z" strokeDasharray="2 1" />
            <path d="M6.5 2v9M2 6.5h9M5 3.5l1.5-1.5L8 3.5M5 9.5l1.5 1.5L8 9.5M3.5 5L2 6.5 3.5 8M9.5 5L11 6.5 9.5 8" />
          </FitGlyph>
        </StatusRight>
      </StatusBar>

      <Taskbar>
        <StartBtn>
          <svg width="16" height="16" viewBox="0 0 16 16" fill="#fff">
            <path d="M0 2.3l7-1v6.3H0zM7.8 1.2L16 0v7.6H7.8zM0 8.4h7v6.3l-7-1zM7.8 8.4H16V16l-8.2-1.2z" />
          </svg>
        </StartBtn>
        <SearchBox>Windows 검색</SearchBox>
        <TaskBtn $w={47}>
          <svg width="20" height="16" viewBox="0 0 20 16" fill="none" stroke="#fff">
            <path d="M5.5 1.5h9v13h-9zM3 3.5H.5v9H3M17 3.5h2.5v9H17" />
          </svg>
        </TaskBtn>
        <TaskBtn $w={50}><FaEdgeLegacy size={21} color="#0f7ad8" /></TaskBtn>
        <TaskBtn $w={49}>
          <FaInternetExplorer size={23} color="#34b6ea" />
          <IeRing width="25" height="26" viewBox="0 0 25 26" fill="none" stroke="#e0b12e" strokeWidth="1.4">
            <path d="M3 24C0 24 1 17 6 11" />
            <path d="M3 24c3 0 6-2 8-3" />
            <path d="M20 4c3-2 5-1 3 3" />
          </IeRing>
        </TaskBtn>
        <TaskBtn $w={49} $open>
          <svg width="22" height="22" viewBox="0 0 22 22">
            <circle cx="11" cy="11" r="11" fill="#db4437" />
            <path d="M11 11L1.5 16.5A11 11 0 0 0 11 22h.5z" fill="#0f9d58" />
            <path d="M11 6h9.5A11 11 0 0 1 11 22z" fill="#f4c20d" />
            <circle cx="11" cy="11" r="5" fill="#fff" />
            <circle cx="11" cy="11" r="3.9" fill="#4285f4" />
          </svg>
        </TaskBtn>
        <TaskBtn $w={49}>
          <svg width="21" height="20" viewBox="0 0 21 20">
            <path d="M0 0h8l1 2h12v18H0z" fill="#f9dc82" />
            <path d="M0 0h8l1 2v1H0z" fill="#e8bd4e" />
            <path d="M4 17v-4l6.5-4 6.5 4v4h-4v-3H8v3z" fill="#3aaee8" />
          </svg>
        </TaskBtn>
        <TaskBtn $w={49}>
          <svg width="20" height="24" viewBox="0 0 20 24" fill="#fff">
            <path d="M0 6l20-2v18L0 24z" />
            <path d="M5 5V3c0-4 9-4 9 0v1" fill="none" stroke="#fff" strokeWidth="1.2" />
            <path d="M6 10h3.5v3.5H6zM10.5 10H14v3.500h-3.500zM6 14.500h3.500V18H6zM10.500 14.500H14V18h-3.500z" fill="#000" />
          </svg>
        </TaskBtn>
        <TaskBtn $w={48} $open $active $ml={1}>
          <svg width="24" height="24" viewBox="0 0 24 24">
            <path d="M12 4h11v16H12z" fill="#fff" stroke="#d24726" />
            <path d="M15 7h5v5h-5zM15 14h6M15 17h6" fill="#d24726" stroke="#d24726" strokeWidth=".6" />
            <path d="M0 3l14-3v24L0 21z" fill="#d24726" />
            <text x="3" y="16" fontSize="12" fontWeight="700" fill="#fff" letterSpacing="0" fontFamily="Liberation Sans, sans-serif">P</text>
          </svg>
        </TaskBtn>
        <Tray>
          <TraySlot $w={22}>
            <svg width="12" height="7" viewBox="0 0 12 7" fill="none" stroke="#fff"><path d="M.5 6.5L6 1l5.5 5.5" /></svg>
          </TraySlot>
          <TraySlot $w={28}>
            <svg width="16" height="13" viewBox="0 0 16 13" fill="#fff">
              <path d="M3.5 3h11v8h-11zM15 5.5h1v3h-1z" />
              <path d="M3 0v2M6 0v2M2 2h5v2L4.5 6v2" stroke="#fff" fill="none" />
            </svg>
          </TraySlot>
          <TraySlot $w={24}>
            <svg width="14" height="14" viewBox="0 0 14 14" fill="none" stroke="#cfcfcf" strokeDasharray="1.5 1">
              <path d="M1 13.5A12.5 12.5 0 0 1 13.5 1M3.5 13.5a10 10 0 0 1 10-10M6 13.5a7.5 7.5 0 0 1 7.5-7.5M8.5 13.5a5 5 0 0 1 5-5" />
            </svg>
          </TraySlot>
          <TraySlot $w={20}>
            <svg width="14" height="14" viewBox="0 0 14 14" fill="none" stroke="#fff">
              <path d="M.5 4.5h2L6.5 1v12L2.5 9.500h-2zM9 5l4 4M13 5l-4 4" />
            </svg>
          </TraySlot>
          <TraySlot $w={28}>
            <svg width="14" height="14" viewBox="0 0 14 14">
              <circle cx="7" cy="7" r="7" fill="#777" />
              <path d="M4.5 4.5l5 5M9.5 4.5l-5 5" stroke="#111" strokeWidth="2" />
            </svg>
          </TraySlot>
          <Clock>
            오후 8:54
            <br />
            2017-05-19
          </Clock>
          <TraySlot $w={46}>
            <svg width="16" height="16" viewBox="0 0 16 16" fill="none" stroke="#fff">
              <path d="M.5.5h15v12H10l-2 2.5-2-2.500H.5z" />
            </svg>
          </TraySlot>
          <TraySlot $w={4} />
        </Tray>
      </Taskbar>

      <ContextMenu>
        <Items icon={<Scissors />} label="잘라내기" k="T" />
        <Items icon={<CopyIcon />} label="복사" k="C" />
        <MenuHeader>
          <PasteSmall />
          <MenuHeaderText>붙여넣기 옵션:</MenuHeaderText>
        </MenuHeader>
        <PasteRow>
          <PasteOption>
            <PasteOptIcon />
            <PasteGa>가</PasteGa>
          </PasteOption>
        </PasteRow>
        <MenuSep $h={1} />
        <Items icon={<NewSmall />} label="새 슬라이드" k="N" />
        <Items icon={<DupIcon />} label="슬라이드 복제" k="A" />
        <Items icon={<DeleteIcon />} label="슬라이드 삭제" k="D" />
        <Items icon={<SectionIcon />} label="구역 추가" k="A" />
        <MenuSep $h={1} />
        <Items icon={<PublishIcon />} label="슬라이드 게시" k="S" />
        <Items label="업데이트 확인" k="U" off />
        <MenuSep $h={2} />
        <Items icon={<LayoutIcon />} label="레이아웃" k="L" on />
        <Items icon={<ResetIcon />} label="슬라이드 원래대로" k="R" />
        <Items icon={<BgIcon />} label="배경 서식" k="B" tail="..." />
        <MenuSep $h={2} />
        <Items icon={<AlbumIcon />} label="사진 앨범" k="P" tail="..." off />
        <Items icon={<HideIcon />} label="슬라이드 숨기기" k="H" />
        <MenuSep $h={1} />
        <Items icon={<BoardIcon />} label="스토리보딩" k="O" />
      </ContextMenu>

      <LayoutGallery>
        <GalleryHead>Office 테마</GalleryHead>
        <LayoutGrid>
          {thumbs.map((t, i) => (
            <LayoutCell key={i} $on={t.on}>
              <LayoutThumb {...t} />
              <LayoutName>{t.name}</LayoutName>
            </LayoutCell>
          ))}
        </LayoutGrid>
        <Grip width="8" height="8" viewBox="0 0 8 8" fill="#9a9a9a">
          <path d="M6 0h2v2H6zM3 3h2v2H3zM6 3h2v2H6zM0 6h2v2H0zM3 6h2v2H3zM6 6h2v2H6z" />
        </Grip>
      </LayoutGallery>

      <Tooltip>빈 화면</Tooltip>
    </Window>
  );
}

export default App;
